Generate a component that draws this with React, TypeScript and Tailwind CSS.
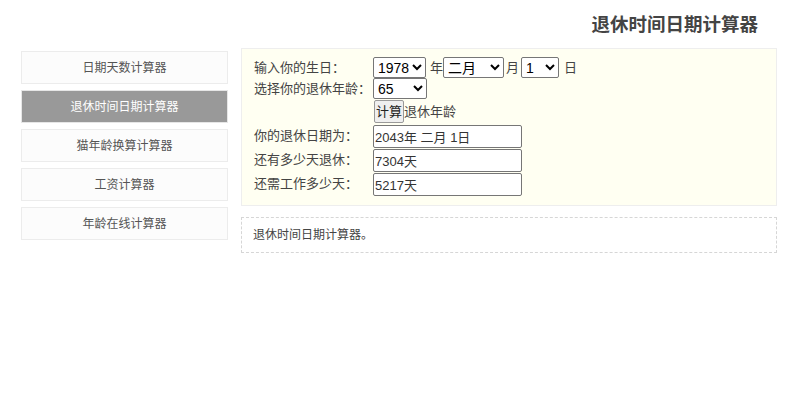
import React from 'react';

const navItems = ['日期天数计算器', '退休时间日期计算器', '猫年龄换算计算器', '工资计算器', '年龄在线计算器'];

const font = { fontFamily: '"Liberation Sans", "Noto Sans CJK SC", sans-serif' };

const App: React.FC = () => {
  return (
    <div className="w-[800px] h-[400px] bg-white text-[#333]" style={font}>
      {/* Header */}
      <div className="flex justify-end pr-[42px] pt-[14px] h-[48px]">
        <h1 className="text-[18.5px] font-bold text-[#444] leading-[22px]">退休时间日期计算器</h1>
      </div>

      <div className="flex pl-[21px] pr-[23px] gap-[13px]">
        {/* Sidebar */}
        <div className="w-[207px] flex flex-col gap-[6px] pt-[3px]">
          {navItems.map((item, i) => (
            <div
              key={item}
              className={
                i === 1
                  ? 'h-[33px] flex items-center justify-center text-[12px] text-white bg-[#999] border border-[#e6e6e6]'
                  : 'h-[33px] flex items-center justify-center text-[12px] text-[#555] bg-[#fcfcfc] border border-[#ececec]'
              }
            >
              {item}
            </div>
          ))}
        </div>

        {/* Main */}
        <div className="flex-1 flex flex-col gap-[11px]">
          <div className="bg-[#fffff2] border border-[#eee] h-[158px] pl-[12px] pt-[8px] text-[13px] text-[#444]">
            <div className="flex items-center h-[21px]">
              <span className="w-[119px]">输入你的生日：</span>
              <select className="w-[53px] h-[21px] border border-[#767676] rounded-[2px] bg-white text-black text-[14px]" defaultValue="1978">
                <option>1978</option>
              </select>
              <span className="ml-[4px]">年</span>
              <select className="w-[61px] h-[21px] border border-[#767676] rounded-[2px] bg-white text-black text-[14px]" defaultValue="二月">
                <option>二月</option>
              </select>
              <span className="ml-[2px] mr-[2px]">月</span>
              <select className="w-[38px] h-[21px] border border-[#767676] rounded-[2px] bg-white text-black text-[14px]" defaultValue="1">
                <option>1</option>
              </select>
              <span className="ml-[5px]">日</span>
            </div>
            <div className="flex items-center h-[21px]">
              <span className="w-[119px]">选择你的退休年龄：</span>
              <select className="w-[54px] h-[21px] border border-[#767676] rounded-[2px] bg-white text-black text-[14px]" defaultValue="65">
                <option>65</option>
              </select>
            </div>
            <div className="flex items-center h-[25px] pl-[120px]">
              <button className="w-[30px] h-[23px] bg-[#efefef] border border-[#999] rounded-[2px] text-[13px] text-[#222] leading-none">
                计算
              </button>
              <span>退休年龄</span>
            </div>
            {[
              ['你的退休日期为：', '2043年 二月 1日'],
              ['还有多少天退休：', '7304天'],
              ['还需工作多少天：', '5217天'],
            ].map(([label, value]) => (
              <div key={label} className="flex items-center h-[24px]">
                <span className="w-[119px]">{label}</span>
                <input
                  readOnly
                  value={value}
                  className="w-[149px] h-[23px] border border-[#767676] bg-white px-[1px] text-[13px] text-[#333] rounded-[2px]"
                />
              </div>
            ))}
          </div>

          <div className="border border-dashed border-[#d6d6d6] h-[36px] flex items-center pl-[11px] text-[12px] text-[#444]">
            退休时间日期计算器。
          </div>
        </div>
      </div>
    </div>
  );
};

export default App;
